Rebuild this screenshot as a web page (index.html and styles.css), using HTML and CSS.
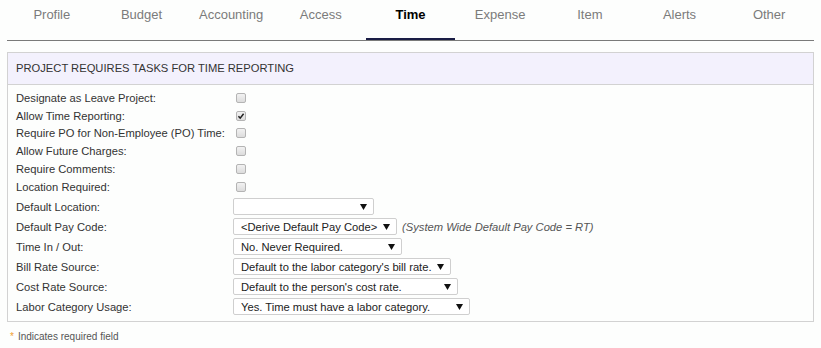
FILE: index.html
```html
<!DOCTYPE html>
<html>
<head>
<meta charset="utf-8">
<link rel="stylesheet" href="styles.css">
</head>
<body>
<nav class="tabs">
  <div class="tab">Profile</div>
  <div class="tab">Budget</div>
  <div class="tab">Accounting</div>
  <div class="tab">Access</div>
  <div class="tab active">Time</div>
  <div class="tab">Expense</div>
  <div class="tab">Item</div>
  <div class="tab">Alerts</div>
  <div class="tab">Other</div>
</nav>

<section class="panel">
  <header class="panel-head">PROJECT REQUIRES TASKS FOR TIME REPORTING</header>
  <div class="panel-body">
    <div class="row chk-row"><div class="label">Designate as Leave Project:</div><div class="field"><span class="cb"></span></div></div>
    <div class="row chk-row"><div class="label">Allow Time Reporting:</div><div class="field"><span class="cb checked"><svg viewBox="0 0 10 10" width="10" height="10"><path d="M2.4 5.2 L4.2 7.1 L7.6 2.8" fill="none" stroke="#222" stroke-width="1.5"/></svg></span></div></div>
    <div class="row chk-row"><div class="label">Require PO for Non-Employee (PO) Time:</div><div class="field"><span class="cb"></span></div></div>
    <div class="row chk-row"><div class="label">Allow Future Charges:</div><div class="field"><span class="cb"></span></div></div>
    <div class="row chk-row"><div class="label">Require Comments:</div><div class="field"><span class="cb"></span></div></div>
    <div class="row chk-row"><div class="label">Location Required:</div><div class="field"><span class="cb"></span></div></div>

    <div class="row sel-row first-sel"><div class="label">Default Location:</div><div class="field"><div class="select sel-location"><span class="val"></span><svg class="arrow" viewBox="0 0 7 6" width="7" height="6"><path d="M0 0 H7 L3.5 6 Z" fill="#111"/></svg></div></div></div>
    <div class="row sel-row"><div class="label">Default Pay Code:</div><div class="field"><div class="select sel-paycode"><span class="val">&lt;Derive Default Pay Code&gt;</span><svg class="arrow" viewBox="0 0 7 6" width="7" height="6"><path d="M0 0 H7 L3.5 6 Z" fill="#111"/></svg></div><span class="note">(System Wide Default Pay Code = RT)</span></div></div>
    <div class="row sel-row"><div class="label">Time In / Out:</div><div class="field"><div class="select sel-timeinout"><span class="val">No. Never Required.</span><svg class="arrow" viewBox="0 0 7 6" width="7" height="6"><path d="M0 0 H7 L3.5 6 Z" fill="#111"/></svg></div></div></div>
    <div class="row sel-row"><div class="label">Bill Rate Source:</div><div class="field"><div class="select sel-bill"><span class="val">Default to the labor category's bill rate.</span><svg class="arrow" viewBox="0 0 7 6" width="7" height="6"><path d="M0 0 H7 L3.5 6 Z" fill="#111"/></svg></div></div></div>
    <div class="row sel-row"><div class="label">Cost Rate Source:</div><div class="field"><div class="select sel-cost"><span class="val">Default to the person's cost rate.</span><svg class="arrow" viewBox="0 0 7 6" width="7" height="6"><path d="M0 0 H7 L3.5 6 Z" fill="#111"/></svg></div></div></div>
    <div class="row sel-row"><div class="label">Labor Category Usage:</div><div class="field"><div class="select sel-labor"><span class="val">Yes. Time must have a labor category.</span><svg class="arrow" viewBox="0 0 7 6" width="7" height="6"><path d="M0 0 H7 L3.5 6 Z" fill="#111"/></svg></div></div></div>
  </div>
</section>

<footer class="legend"><span class="star">*</span><span class="legend-text">Indicates required field</span></footer>
</body>
</html>
```
FILE: styles.css
```css
html, body {
  margin: 0;
  padding: 0;
  background: #fdfefd;
  font-family: "Liberation Sans", Arial, sans-serif;
  color: #333;
}

.tabs {
  display: grid;
  grid-template-columns: repeat(9, 1fr);
  margin: 0 7px;
  border-bottom: 1px solid #7a7a7a;
}

.tab {
  height: 40px;
  box-sizing: border-box;
  padding-top: 7px;
  line-height: 16px;
  font-size: 13px;
  color: #7b7b7b;
  text-align: center;
  border-bottom: 2px solid transparent;
}

.tab.active {
  color: #000;
  font-weight: bold;
  border-bottom-color: #1a1d45;
}

.panel {
  margin: 11px 7px 0 7px;
  border: 1px solid #d2d2d2;
}

.panel-head {
  height: 32px;
  box-sizing: border-box;
  background: #f3f1fd;
  border-bottom: 1px solid #d2d2d2;
  padding: 8px 0 0 8px;
  font-size: 11.2px;
  line-height: 14px;
  color: #333;
}

.panel-body {
  padding: 4px 8px 4px 8px;
}

.row {
  display: flex;
  align-items: center;
  font-size: 11.2px;
}

.chk-row { height: 17.8px; }
.sel-row { height: 20px; }
.first-sel { margin-top: 1px; }

.label {
  width: 217px;
  flex: none;
  color: #333;
}

.field {
  display: flex;
  align-items: center;
}

.cb {
  display: inline-block;
  width: 10px;
  height: 10px;
  box-sizing: border-box;
  margin-left: 3px;
  border: 1px solid #b4b4b4;
  border-radius: 2px;
  background: linear-gradient(#f2f2f2, #dcdcdc);
  position: relative;
}

.cb svg {
  position: absolute;
  left: -1px;
  top: -1px;
}

.select {
  height: 17px;
  box-sizing: border-box;
  border: 1px solid #cfcfcf;
  border-radius: 2px;
  background: #fff;
  display: flex;
  align-items: center;
  justify-content: space-between;
  padding: 0 6px 0 7px;
  font-size: 11.2px;
  color: #222;
}

.select .arrow { flex: none; }

.sel-location { width: 141px; }
.sel-paycode { width: 164px; }
.sel-timeinout { width: 169px; }
.sel-bill { width: 218px; }
.sel-cost { width: 225px; }
.sel-labor { width: 237px; }

.note {
  margin-left: 5px;
  font-style: italic;
  color: #555;
  font-size: 11.2px;
}

.legend {
  margin: 9px 0 0 10px;
  font-size: 10px;
  line-height: 12px;
}

.star {
  color: #f0a030;
  margin-right: 4px;
}

.legend-text { color: #555; }
```
